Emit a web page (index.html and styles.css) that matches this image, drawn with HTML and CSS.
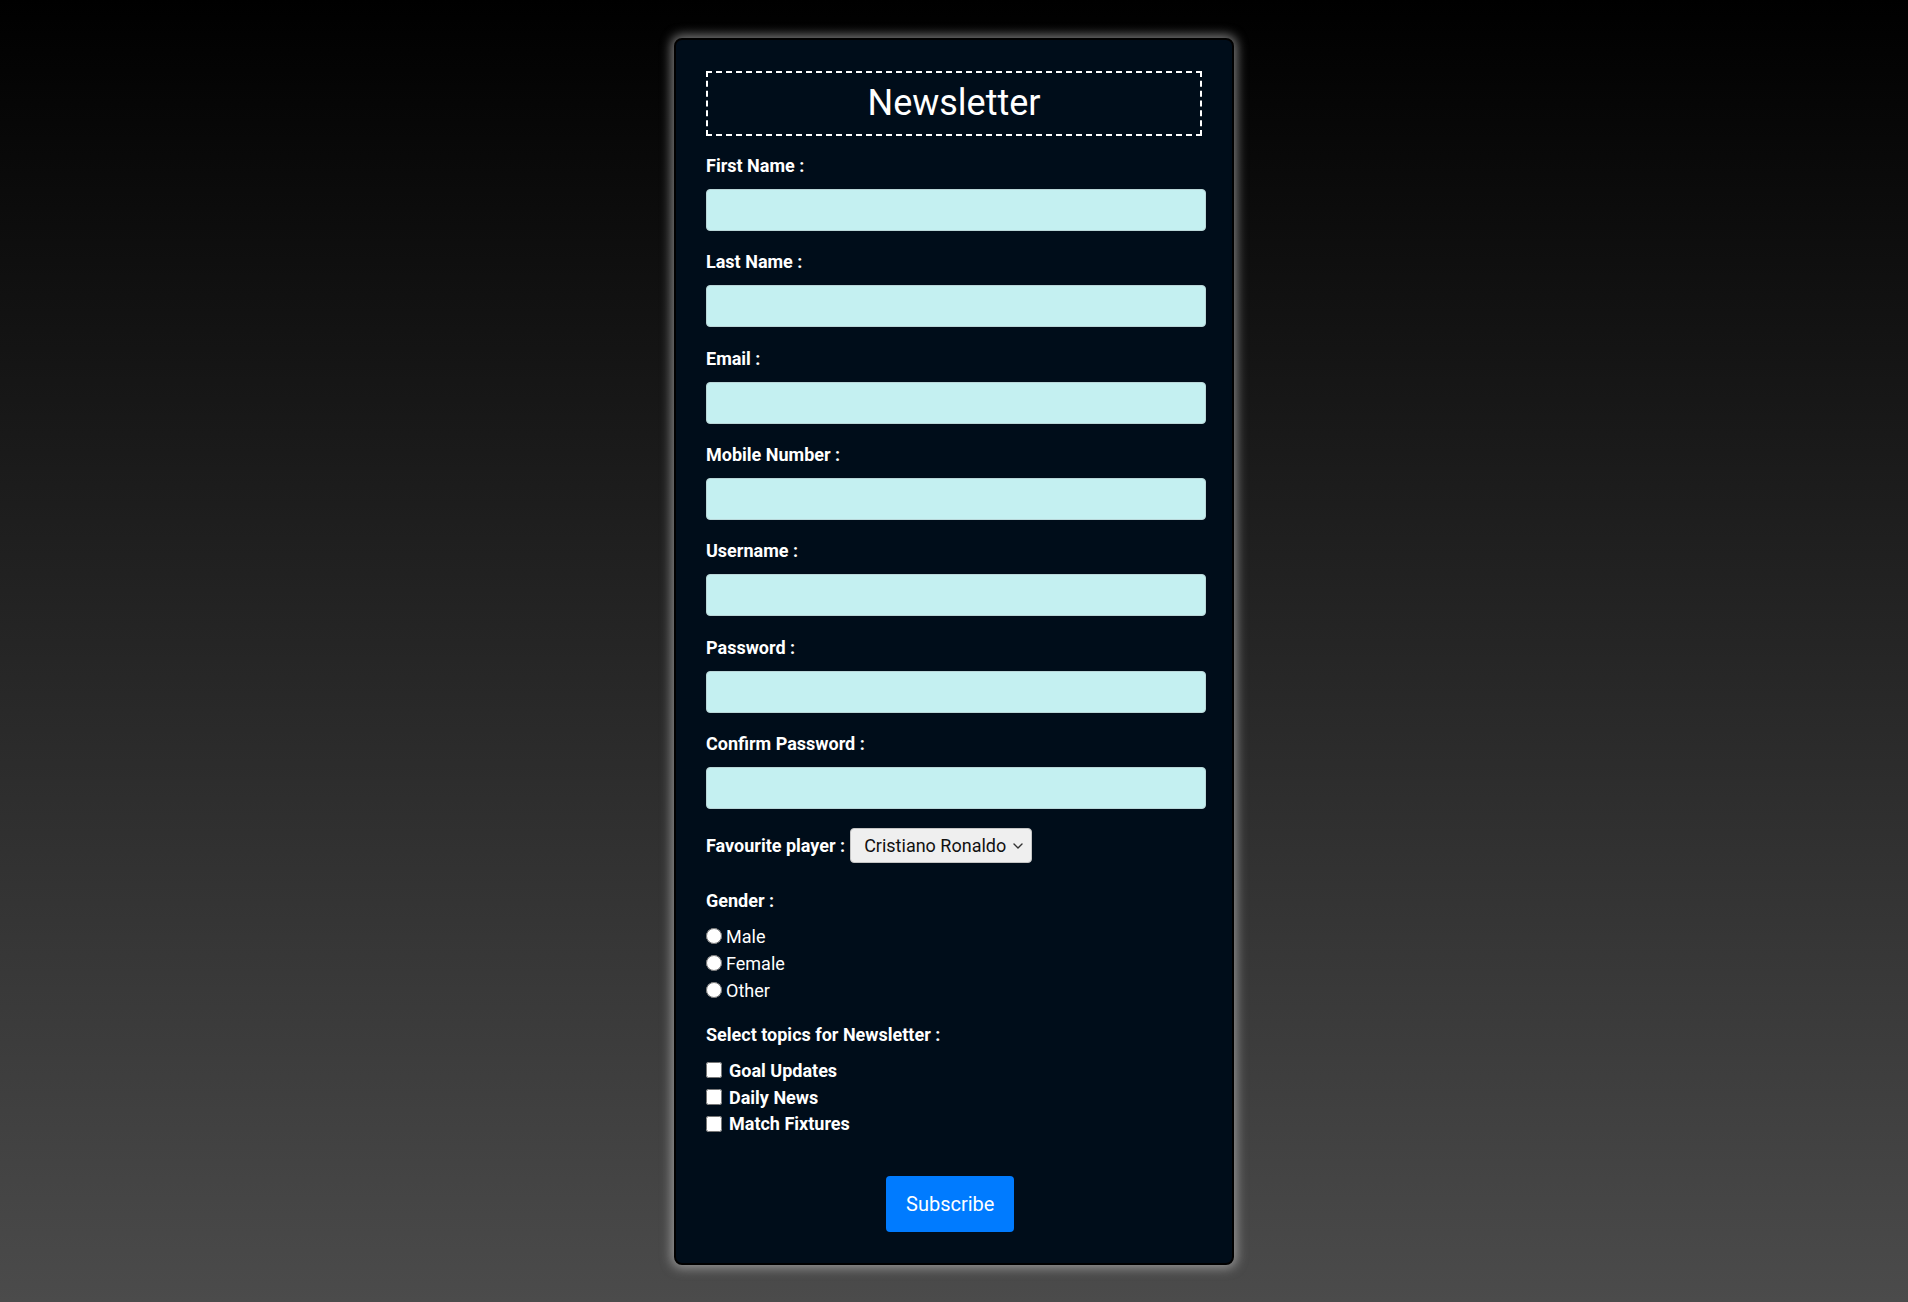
FILE: index.html
```html
<!DOCTYPE html>
<html lang="en">
<head>
<meta charset="utf-8">
<title>Newsletter</title>
<link rel="stylesheet" href="styles.css">
</head>
<body>
  <div class="card">
    <h1 class="title">Newsletter</h1>
    <form class="form">
      <div class="field">
        <label class="label" for="fname">First Name :</label>
        <input class="text-input" type="text" id="fname">
      </div>
      <div class="field">
        <label class="label" for="lname">Last Name :</label>
        <input class="text-input" type="text" id="lname">
      </div>
      <div class="field">
        <label class="label" for="email">Email :</label>
        <input class="text-input" type="email" id="email">
      </div>
      <div class="field">
        <label class="label" for="mobile">Mobile Number :</label>
        <input class="text-input" type="tel" id="mobile">
      </div>
      <div class="field">
        <label class="label" for="uname">Username :</label>
        <input class="text-input" type="text" id="uname">
      </div>
      <div class="field">
        <label class="label" for="pwd">Password :</label>
        <input class="text-input" type="password" id="pwd">
      </div>
      <div class="field">
        <label class="label" for="cpwd">Confirm Password :</label>
        <input class="text-input" type="password" id="cpwd">
      </div>
      <div class="select-row">
        <label class="label" for="player">Favourite player :</label>
        <div class="select-wrap">
          <select class="select" id="player">
            <option>Cristiano Ronaldo</option>
            <option>Lionel Messi</option>
            <option>Neymar Jr</option>
          </select>
          <svg class="chevron" width="10" height="6" viewBox="0 0 10 6" aria-hidden="true"><path d="M1 1l4 4 4-4" fill="none" stroke="#333" stroke-width="1.4" stroke-linecap="round" stroke-linejoin="round"/></svg>
        </div>
      </div>
      <div class="group group-gender">
        <div class="label">Gender :</div>
        <div class="options">
          <label class="option"><input class="radio" type="radio" name="gender">Male</label>
          <label class="option"><input class="radio" type="radio" name="gender">Female</label>
          <label class="option"><input class="radio" type="radio" name="gender">Other</label>
        </div>
      </div>
      <div class="group">
        <div class="label">Select topics for Newsletter :</div>
        <div class="options">
          <label class="option option-bold"><input class="check" type="checkbox">Goal Updates</label>
          <label class="option option-bold"><input class="check" type="checkbox">Daily News</label>
          <label class="option option-bold"><input class="check" type="checkbox">Match Fixtures</label>
        </div>
      </div>
      <button class="button" type="button">Subscribe</button>
    </form>
  </div>
</body>
</html>
```
FILE: styles.css
```css
* {
  box-sizing: border-box;
}

html {
  min-height: 100%;
  background: #4a4a4a;
}

body {
  margin: 0;
  min-height: 100vh;
  padding-top: 38px;
  display: flex;
  justify-content: center;
  align-items: flex-start;
  background: linear-gradient(to bottom, #000000 0%, #4b4b4b 100%);
  font-family: Roboto, "Liberation Sans", Arial, sans-serif;
  color: #ffffff;
}

.card {
  width: 560px;
  padding: 31px 30px 31px;
  background: #000d1a;
  border: 2px solid #000000;
  border-radius: 8px;
  box-shadow: 0 0 11px 3px rgba(200, 200, 200, 0.6);
}

.title {
  margin: 0;
  height: 65px;
  line-height: 61px;
  border: 2px dashed #ffffff;
  text-align: center;
  font-size: 36px;
  font-weight: 400;
  color: #ffffff;
}

.form {
  margin-top: 19px;
  display: flex;
  flex-direction: column;
  gap: 20.33px;
}

.field {
  display: flex;
  flex-direction: column;
}

.label {
  display: block;
  font-size: 18px;
  line-height: 22px;
  font-weight: 700;
  color: #ffffff;
}

.text-input {
  box-sizing: content-box;
  width: 100%;
  height: 40px;
  margin-top: 12px;
  padding: 0 1px;
  border: 1px solid #b9d6d8;
  border-radius: 4px;
  background: #c4f0f1;
  font-family: inherit;
  font-size: 16px;
  outline: none;
}

.select-row {
  display: flex;
  align-items: center;
  gap: 5px;
  margin-top: -1px;
}

.select-wrap {
  position: relative;
  display: flex;
}

.select {
  appearance: none;
  -webkit-appearance: none;
  height: 35px;
  width: 182px;
  padding: 0 24px 0 13px;
  border: 1px solid #c4c4c4;
  border-radius: 4px;
  background-color: #efefef;
  color: #111111;
  font-family: inherit;
  font-size: 18px;
}

.chevron {
  position: absolute;
  right: 9px;
  top: 15px;
  pointer-events: none;
}

.group-gender {
  margin-top: 6px;
}

.options {
  margin-top: 11px;
  display: flex;
  flex-direction: column;
}

.option {
  display: flex;
  align-items: center;
  height: 27px;
  font-size: 18px;
  color: #ffffff;
}

.option-bold {
  font-weight: 700;
  height: 26.75px;
}

.radio {
  width: 16px;
  height: 16px;
  margin: 0 4px 0 0;
}

.check {
  width: 16px;
  height: 16px;
  margin: 0 7px 0 0;
}

.button {
  align-self: flex-start;
  margin-top: 18px;
  margin-left: 180px;
  padding: 16px 20px;
  border: none;
  border-radius: 4px;
  background: #007bff;
  color: #ffffff;
  font-family: inherit;
  font-size: 20px;
  line-height: 24px;
}
```
